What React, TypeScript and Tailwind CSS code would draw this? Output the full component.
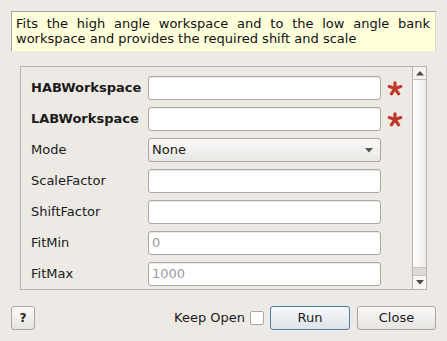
import React from "react";

const font = { fontFamily: '"DejaVu Sans", "Liberation Sans", sans-serif' };

function Asterisk() {
  return (
    <svg width="16" height="15" viewBox="0 0 16 15" className="shrink-0">
      <g stroke="#c0392b" strokeWidth="3.2" strokeLinecap="round">
        <line x1="8" y1="1.8" x2="8" y2="7.5" />
        <line x1="8" y1="7.5" x2="2.2" y2="5.6" />
        <line x1="8" y1="7.5" x2="13.8" y2="5.6" />
        <line x1="8" y1="7.5" x2="4.4" y2="12.8" />
        <line x1="8" y1="7.5" x2="11.6" y2="12.8" />
      </g>
    </svg>
  );
}

function Row({ label, bold, children, required }: { label: string; bold?: boolean; children: React.ReactNode; required?: boolean }) {
  return (
    <div className="flex items-center h-[24px]">
      <div className={`w-[117px] shrink-0 text-[13px] text-[#1a1a1a] ${bold ? "font-bold" : ""}`}>{label}</div>
      <div className="w-[233px] h-[24px] shrink-0">{children}</div>
      {required ? <div className="ml-[6px]"><Asterisk /></div> : null}
    </div>
  );
}

function TextInput({ placeholder }: { placeholder?: string }) {
  return (
    <div className="w-full h-full bg-white border border-[#aaa7a3] rounded-[3px] flex items-center pl-[3px] text-[13px] text-[#9a9a9a] shadow-[inset_0_1px_0_#ebebeb]">
      {placeholder ?? ""}
    </div>
  );
}

function Combo() {
  return (
    <div className="w-full h-full border border-[#aaa7a3] rounded-[3px] flex items-center pl-[3px] pr-[7px] text-[13px] text-[#1a1a1a] bg-gradient-to-b from-[#fbfaf9] to-[#e9e7e4]">
      <span className="flex-1">None</span>
      <svg width="8" height="5" viewBox="0 0 8 5"><path d="M0 0 H8 L4 4.5 Z" fill="#555" /></svg>
    </div>
  );
}

export default function App() {
  return (
    <div style={font} className="w-[447px] h-[341px] bg-[#edeae6] flex flex-col overflow-hidden">
      <div className="mt-[11px] mx-[11px] h-[40px] bg-[#ffffdc] border-t border-l border-[#a6a49e] border-r border-r-[#d8d6cf] pl-[4px] pr-[5px] pt-[4px] text-[13px] leading-[15px] text-[#111] text-justify">
        Fits the high angle workspace and to the low angle bank workspace and provides the required shift and scale
      </div>

      <div className="mt-[15px] ml-[20px] w-[407px] h-[224px] border border-[#b6b2ad] flex">
        <div className="flex-1 overflow-hidden pt-[9px] pl-[10px] flex flex-col gap-[7px]">
          <Row label="HABWorkspace" bold required><TextInput /></Row>
          <Row label="LABWorkspace" bold required><TextInput /></Row>
          <Row label="Mode"><Combo /></Row>
          <Row label="ScaleFactor"><TextInput /></Row>
          <Row label="ShiftFactor"><TextInput /></Row>
          <Row label="FitMin"><TextInput placeholder="0" /></Row>
          <Row label="FitMax"><TextInput placeholder="1000" /></Row>
        </div>
        <div className="w-[14px] shrink-0 border-l border-[#b6b2ad] flex flex-col bg-[#dedbd7]">
          <div className="h-[13px] bg-[#f4f3f1] border-b border-[#c6c3bf] flex items-center justify-center">
            <svg width="8" height="5" viewBox="0 0 8 5"><path d="M0 4.5 H8 L4 0 Z" fill="#4a4a4a" /></svg>
          </div>
          <div className="h-[188px] bg-gradient-to-r from-[#ffffff] to-[#ecebe9] border-b border-[#c6c3bf]" />
          <div className="flex-1" />
          <div className="h-[14px] bg-[#f8f7f6] border-t border-[#c6c3bf] flex items-center justify-center">
            <svg width="8" height="5" viewBox="0 0 8 5"><path d="M0 0 H8 L4 4.5 Z" fill="#4a4a4a" /></svg>
          </div>
        </div>
      </div>

      <div className="mt-[16px] px-[11px] flex items-center h-[24px]">
        <div className="w-[24px] h-[24px] border border-[#aaa7a3] rounded-[3px] bg-gradient-to-b from-[#fbfaf9] to-[#e6e4e1] flex items-center justify-center text-[12px] font-bold text-[#222]">?</div>
        <div className="flex-1" />
        <span className="text-[13px] text-[#1a1a1a]">Keep Open</span>
        <div className="ml-[5px] w-[14px] h-[14px] bg-white border border-[#aaa7a3] rounded-[2px]" />
        <div className="ml-[6px] w-[80px] h-[24px] border border-[#4f7eab] rounded-[3px] bg-gradient-to-b from-[#f7f9fb] to-[#dde3e8] flex items-center justify-center text-[13px] text-[#1a1a1a]">Run</div>
        <div className="ml-[7px] w-[79px] h-[24px] border border-[#aaa7a3] rounded-[3px] bg-gradient-to-b from-[#fbfaf9] to-[#e6e4e1] flex items-center justify-center text-[13px] text-[#1a1a1a]">Close</div>
      </div>
    </div>
  );
}
